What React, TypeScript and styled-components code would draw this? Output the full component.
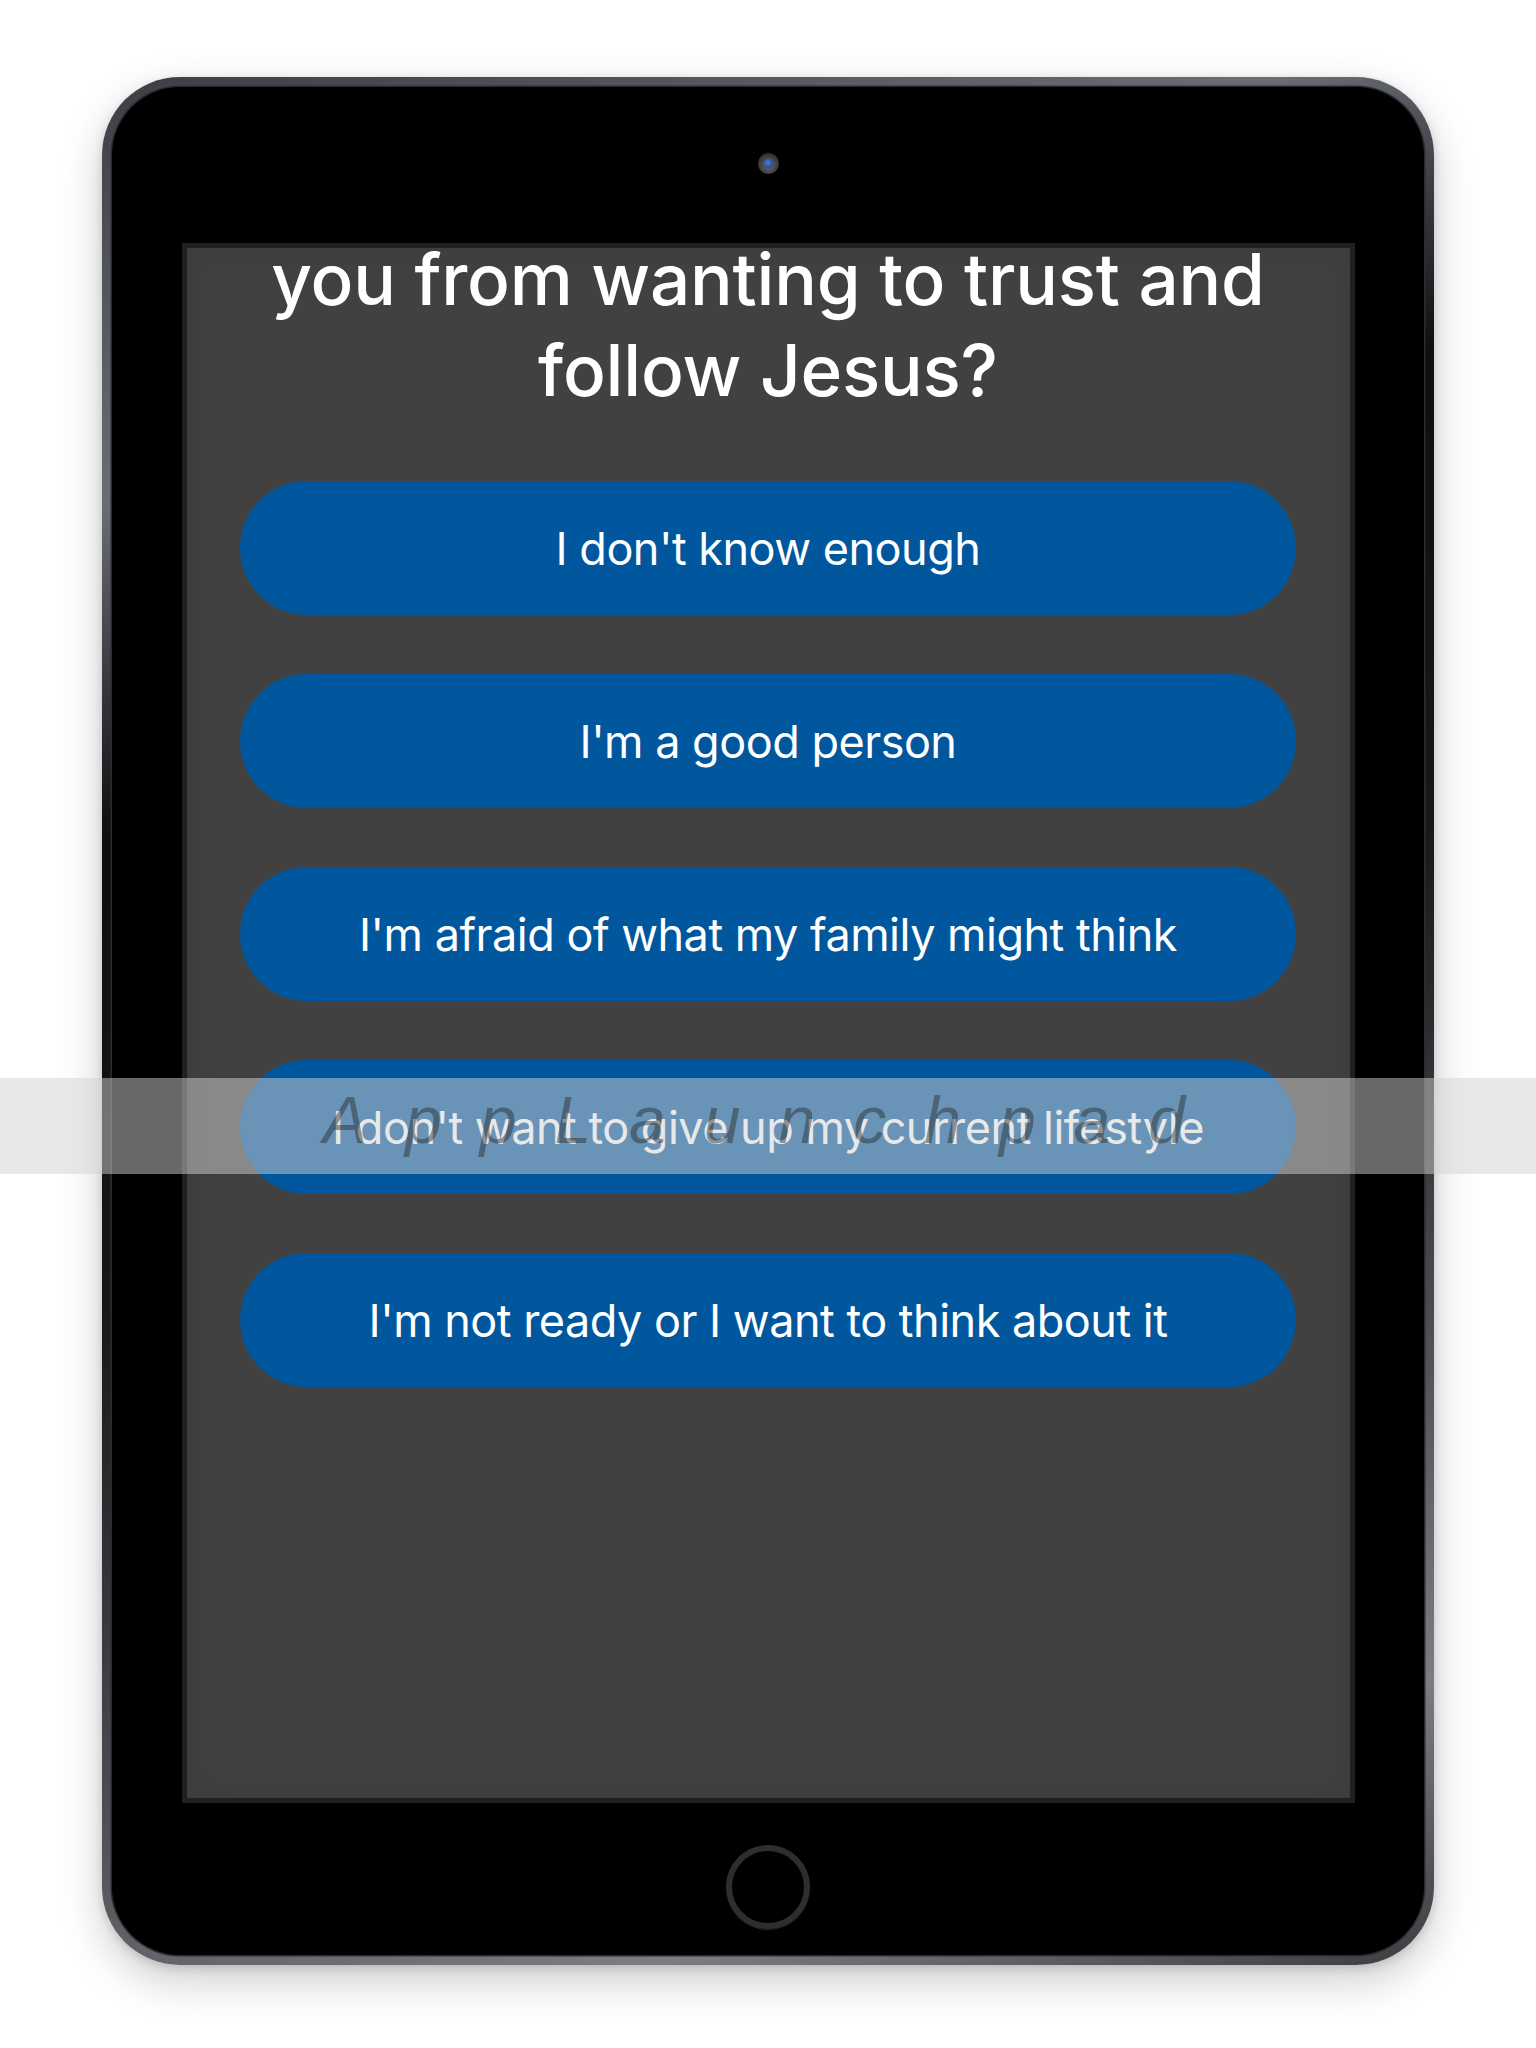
import React from "react";
import styled, { createGlobalStyle } from "styled-components";

const Global = createGlobalStyle`
  html, body { margin: 0; padding: 0; background: #ffffff; }
  * { box-sizing: border-box; }
`;

const Page = styled.div`
  position: relative;
  width: 1536px;
  height: 2048px;
  padding-top: 77px;
  display: flex;
  justify-content: center;
  align-items: flex-start;
  background: #ffffff;
  overflow: hidden;
`;

const Device = styled.div`
  width: 1332px;
  height: 1888px;
  border-radius: 78px;
  padding: 10px;
  background: linear-gradient(
    160deg,
    #3c3e44 0%,
    #6a6d74 18%,
    #0e0e10 32%,
    #18181a 52%,
    #4a4a50 72%,
    #7c7c82 88%,
    #3c3c40 100%
  );
  box-shadow: 0 16px 44px rgba(0, 0, 0, 0.2), 0 3px 10px rgba(0, 0, 0, 0.14);
`;

const Bezel = styled.div`
  width: 100%;
  height: 100%;
  border-radius: 68px;
  background: #000000;
  box-shadow: 0 0 0 1.5px #2b2c30;
  display: flex;
  flex-direction: column;
  align-items: center;
  padding-top: 66px;
`;

const Camera = styled.div`
  width: 21px;
  height: 21px;
  border-radius: 50%;
  background: radial-gradient(circle at 50% 60%, #6a6a6a 0%, #3a3a3a 60%, #1c1c1c 100%);
  display: flex;
  align-items: center;
  justify-content: center;
`;

const Lens = styled.div`
  width: 9px;
  height: 9px;
  border-radius: 50%;
  background: radial-gradient(circle at 45% 40%, #4f7fd6 0%, #2a55a8 60%, #183a78 100%);
`;

const Screen = styled.div`
  margin-top: 69px;
  width: 1173px;
  height: 1560px;
  border: 5px solid #202020;
  background: #414141;
  box-shadow: inset 0 0 40px rgba(0, 0, 0, 0.08);
  overflow: hidden;
  display: flex;
  flex-direction: column;
  align-items: center;
`;

const Title = styled.h1`
  margin: -14px 0 0;
  font-family: Inter, "Noto Sans", sans-serif;
  font-weight: 500;
  font-size: 71px;
  line-height: 91px;
  letter-spacing: -0.2px;
  color: #ffffff;
  text-align: center;
`;

const Options = styled.div`
  margin-top: 65px;
  display: flex;
  flex-direction: column;
  gap: 59px;
`;

const Option = styled.button`
  width: 1056px;
  height: 134px;
  border: none;
  border-radius: 67px;
  background: #01579d;
  color: #ffffff;
  font-family: Inter, "Noto Sans", sans-serif;
  font-weight: 400;
  font-size: 45px;
  letter-spacing: -0.5px;
  display: flex;
  align-items: center;
  justify-content: center;
  padding: 0;
  cursor: pointer;
`;

const HomeButton = styled.div`
  margin-top: 42px;
  width: 84px;
  height: 84px;
  border-radius: 50%;
  border: 6px solid #2e2e30;
  box-shadow: inset 0 2px 2px rgba(0, 0, 0, 0.6), 0 1px 1px rgba(80, 80, 84, 0.5);
`;

const Band = styled.div`
  position: absolute;
  left: 0;
  right: 0;
  top: 1078px;
  height: 96px;
  background: rgba(209, 209, 209, 0.5);
  display: flex;
  justify-content: center;
  pointer-events: none;
`;

const Watermark = styled.span`
  font-family: "Liberation Sans", Arial, sans-serif;
  font-style: italic;
  font-size: 66px;
  line-height: 84px;
  letter-spacing: 38px;
  margin-left: 10px;
  color: rgba(40, 40, 40, 0.45);
`;

const options = [
  "I don't know enough",
  "I'm a good person",
  "I'm afraid of what my family might think",
  "I don't want to give up my current lifestyle",
  "I'm not ready or I want to think about it",
];

export default function App() {
  return (
    <>
      <Global />
      <Page>
        <Device>
          <Bezel>
            <Camera>
              <Lens />
            </Camera>
            <Screen>
              <Title>
                you from wanting to trust and
                <br />
                follow Jesus?
              </Title>
              <Options>
                {options.map((o) => (
                  <Option key={o}>{o}</Option>
                ))}
              </Options>
            </Screen>
            <HomeButton />
          </Bezel>
        </Device>
        <Band>
          <Watermark>AppLaunchpad</Watermark>
        </Band>
      </Page>
    </>
  );
}
